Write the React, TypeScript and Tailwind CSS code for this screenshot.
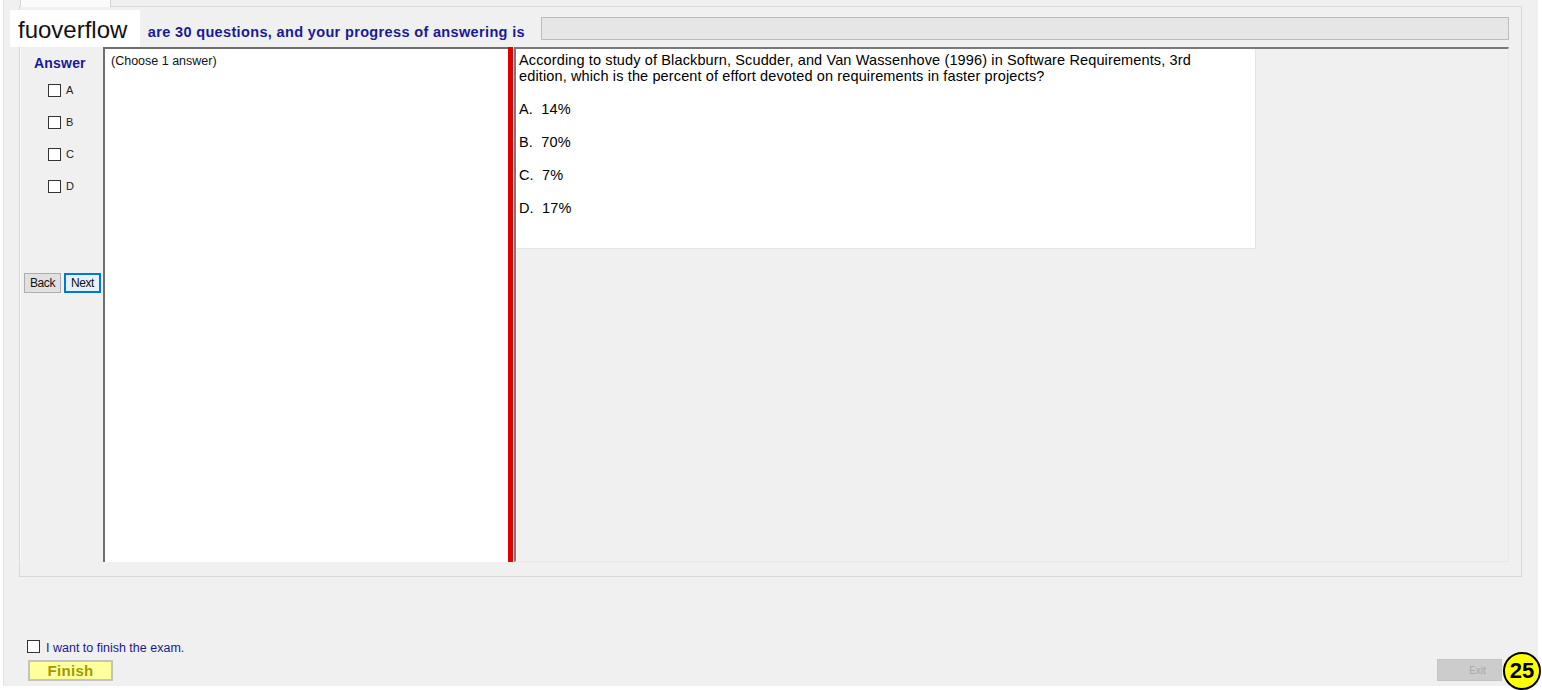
import React from "react";

const Box = () => (
  <span className="inline-block w-[13px] h-[13px] bg-white border border-[#333333] shrink-0" />
);

export default function App() {
  const opts = ["A", "B", "C", "D"];
  return (
    <div className="relative w-[1542px] h-[690px] bg-white font-['Liberation_Sans',Arial,sans-serif] text-black overflow-hidden">
      <div className="ml-[3px] w-[1535px] h-[686px] bg-[#f0f0f0] border-l border-[#e2e2e2] flex flex-col">
        {/* tab strip */}
        <div className="h-[6px] pl-[16px] relative">
          <div className="w-[91px] h-[7px] bg-[#fbfbfb] border-x border-[#d4d4d4]" />
        </div>
        {/* tab page */}
        <div className="ml-[15px] w-[1503px] h-[571px] border border-[#d9d9d9] bg-[#f0f0f0] flex flex-col">
          {/* header row */}
          <div className="h-[40px] flex items-start shrink-0">
            <div className="w-[521px] pr-[16px] mt-[17px] text-right text-[14.5px] leading-[16px] tracking-[0.35px] font-bold text-[#1a1a96] whitespace-nowrap">
              are 30 questions, and your progress of answering is
            </div>
            <div className="mt-[10px] w-[968px] h-[23px] border border-[#bcbcbc] bg-[#e6e6e6]" />
          </div>
          {/* main row */}
          <div className="h-[515px] flex shrink-0">
            {/* left column */}
            <div className="w-[83px] flex flex-col border-l border-[#fafafa]">
              <div className="pt-[8px] pl-[13px] text-[14px] leading-[16px] tracking-[0.2px] font-bold text-[#1a1a96]">Answer</div>
              <div className="mt-[3px] flex flex-col">
                {opts.map((o) => (
                  <div key={o} className="h-[32px] flex items-center pl-[27px]">
                    <Box />
                    <span className="ml-[5px] text-[11px] leading-[13px] text-[#222]">{o}</span>
                  </div>
                ))}
              </div>
              <div className="mt-[71px] pl-[3px] flex gap-[3px]">
                <div className="w-[37px] h-[20px] bg-[#e1e1e1] border border-[#adadad] flex items-center justify-center text-[12px] tracking-[-0.4px] text-[#111]">Back</div>
                <div className="w-[37px] h-[20px] bg-[#e5f1fb] border-2 border-[#0078d7] flex items-center justify-center text-[12px] tracking-[-0.4px] text-[#111]">Next</div>
              </div>
            </div>
            {/* text box */}
            <div className="w-[405px] h-[515px] bg-white border-l-2 border-t-2 border-[#6e6e6e] pl-[6px] pt-[4px]">
              <div className="text-[12.5px] leading-[16px] text-[#111]">(Choose 1 answer)</div>
            </div>
            {/* splitter */}
            <div className="w-[5px] h-[515px] bg-[#e00000]" />
            <div className="w-[1px] h-[515px] bg-[#fbeaea]" />
            {/* right panel */}
            <div className="w-[995px] h-[515px] border-l-2 border-t-2 border-[#7a7a7a] border-r border-b border-r-[#e8e8e8] border-b-[#e8e8e8] bg-[#f0f0f0]">
              <div className="w-[740px] h-[200px] bg-white border-b border-r border-[#e4e4e4] pl-[3px] pt-[3px] text-[14.5px] leading-[16px] tracking-[0.13px]">
                <div className="whitespace-nowrap">According to study of Blackburn, Scudder, and Van Wassenhove (1996) in Software Requirements, 3rd</div>
                <div className="whitespace-nowrap">edition, which is the percent of effort devoted on requirements in faster projects?</div>
                <div className="mt-[8px] flex flex-col">
                  <div className="h-[34px] leading-[34px]">A.&nbsp; 14%</div>
                  <div className="h-[33px] leading-[33px]">B.&nbsp; 70%</div>
                  <div className="h-[33px] leading-[33px]">C.&nbsp; 7%</div>
                  <div className="h-[33px] leading-[33px]">D.&nbsp; 17%</div>
                </div>
              </div>
            </div>
          </div>
        </div>
        {/* bottom area */}
        <div className="flex-1 flex flex-col">
          <div className="mt-[63px] pl-[23px] flex items-center h-[13px]">
            <Box />
            <span className="ml-[6px] mt-[3px] text-[12.5px] leading-[14px] text-[#1a1a8c]">I want to finish the exam.</span>
          </div>
          <div className="mt-[6px] flex items-start justify-between">
            <div className="ml-[24px] mt-[1px] w-[85px] h-[21px] bg-[#ffff9e] border-2 border-[#c4c4b8] flex items-center justify-center pt-[2px] text-[15px] tracking-[0.3px] font-bold text-[#9c9c00]">
              Finish
            </div>
            <div className="mr-[36px] w-[65px] h-[22px] bg-[#cccccc] border border-[#c4c4c4] flex items-center justify-center pl-[16px] text-[10px] text-[#a8a8a8]">
              Exit
            </div>
          </div>
        </div>
      </div>
      {/* watermark */}
      <div className="absolute left-[10px] top-[10px] w-[130px] h-[37px] bg-white pl-[8px] text-[24px] leading-[40px] text-[#111]">
        fuoverflow
      </div>
      {/* badge */}
      <div className="absolute left-[1503px] top-[652px] w-[38px] h-[38px] rounded-full bg-[#ffff00] border-2 border-black flex items-center justify-center text-[22px] font-bold text-black leading-none">
        25
      </div>
    </div>
  );
}
